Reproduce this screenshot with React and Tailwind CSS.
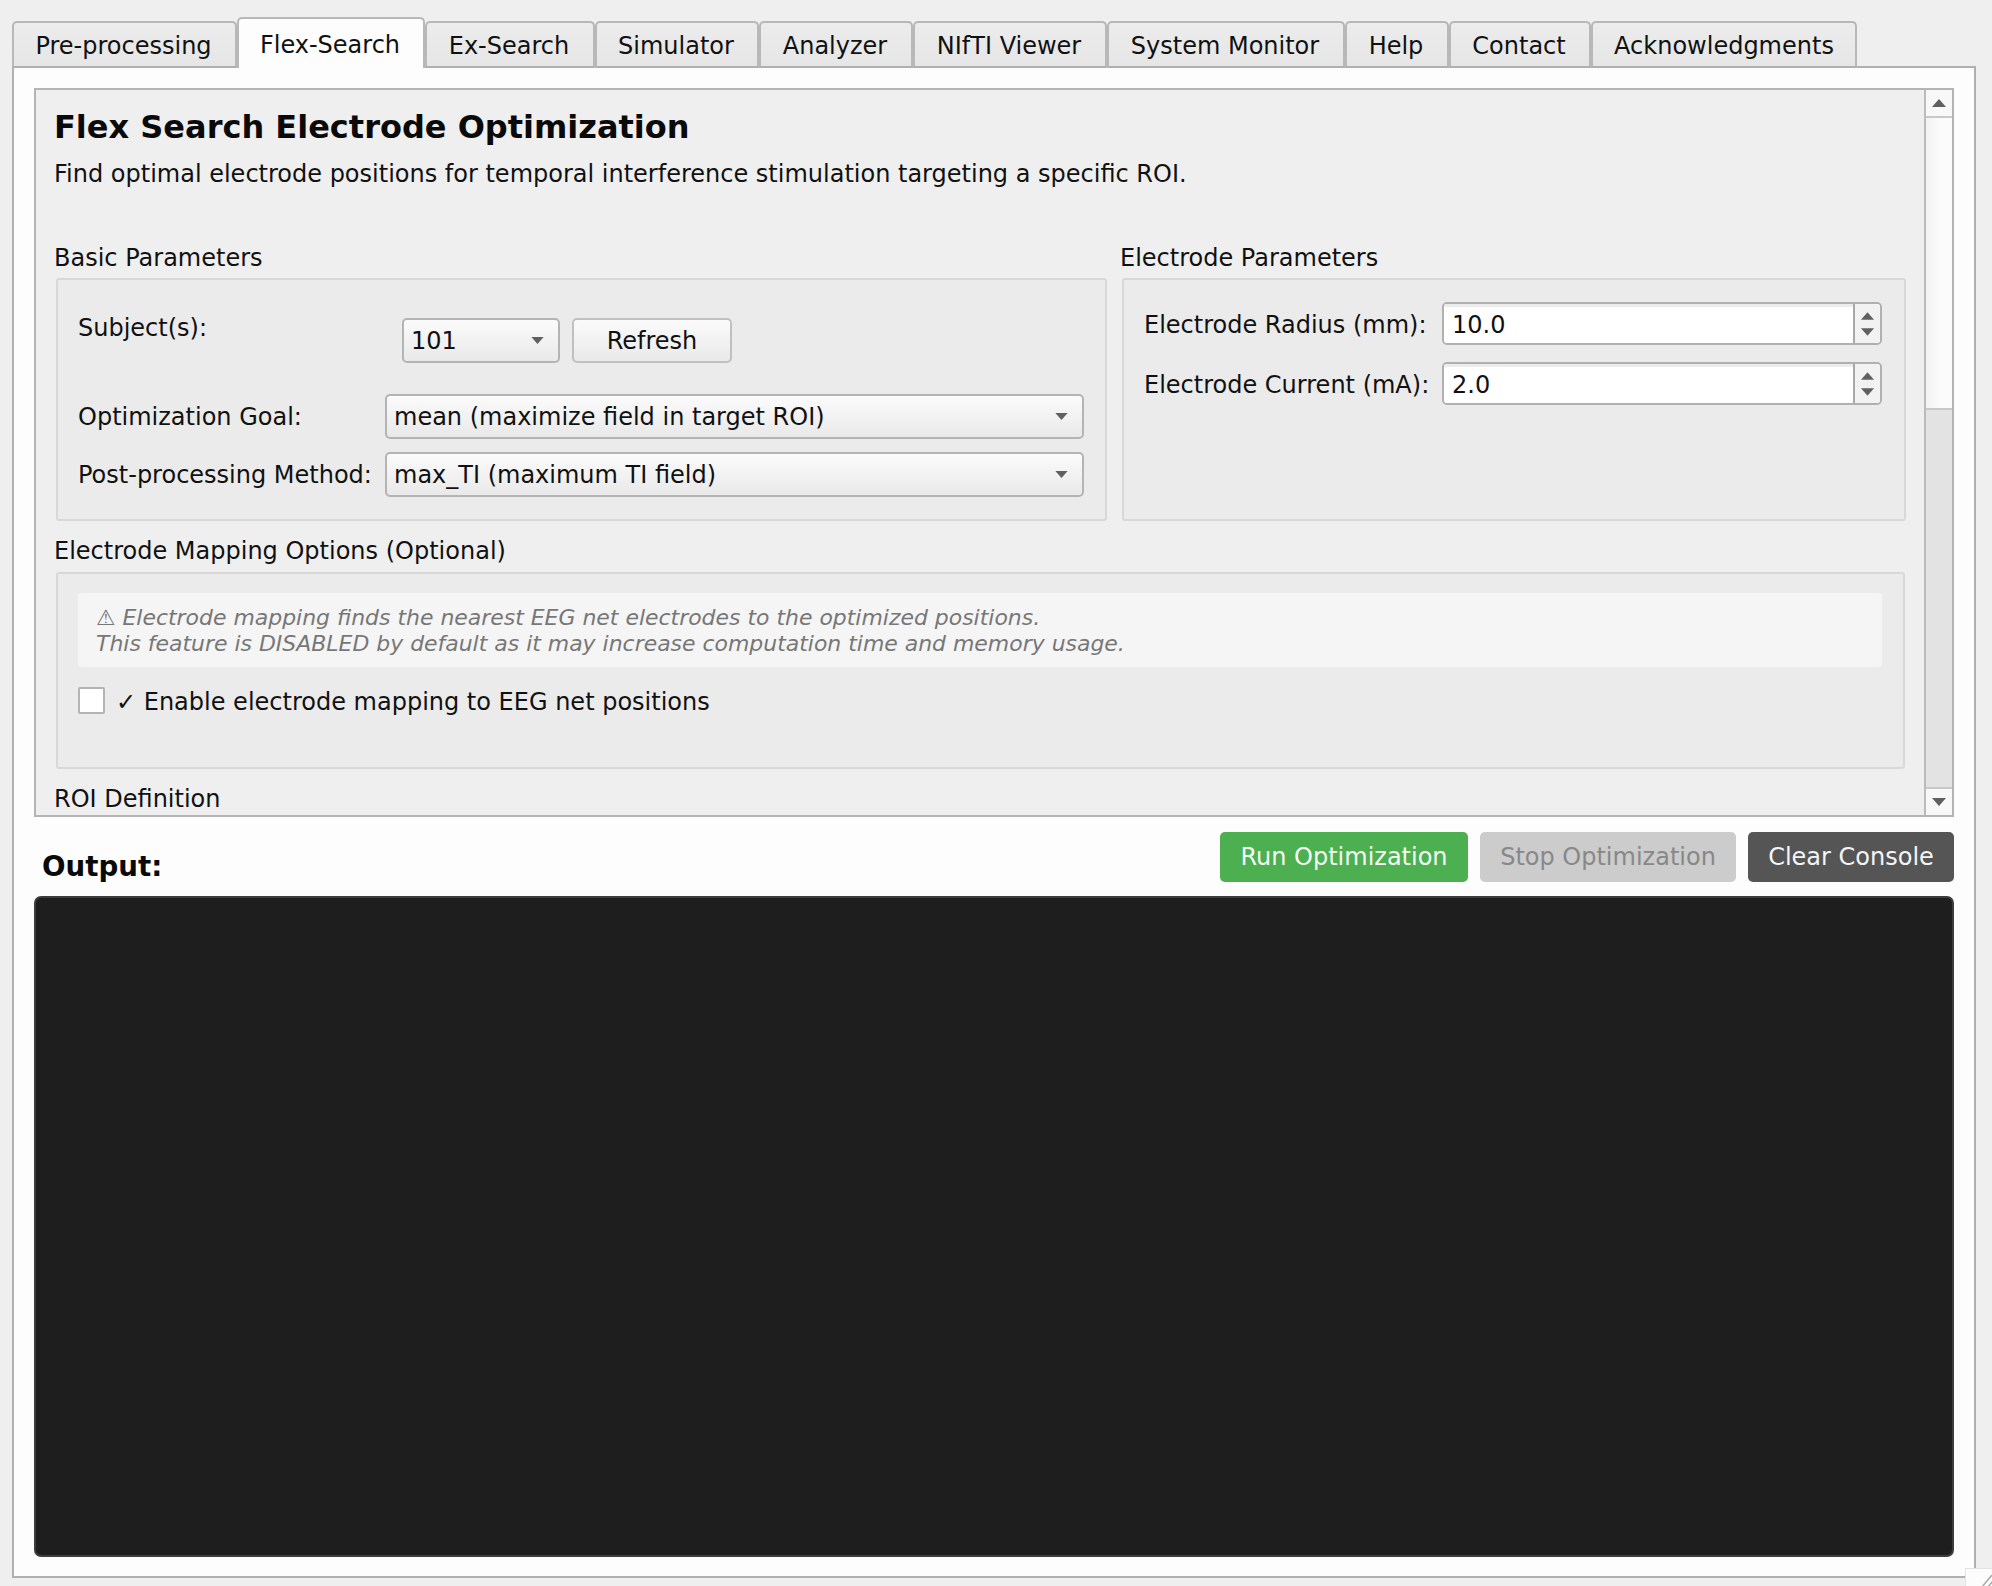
import React from "react";

const tabs = [
  ["Pre-processing", 225],
  ["Flex-Search", 188],
  ["Ex-Search", 170],
  ["Simulator", 164],
  ["Analyzer", 154],
  ["NIfTI Viewer", 194],
  ["System Monitor", 238],
  ["Help", 104],
  ["Contact", 142],
  ["Acknowledgments", 266],
];

function Tri({ dir = "down", cls = "" }) {
  return (
    <svg width="14" height="8" viewBox="0 0 14 8" className={cls}>
      <polygon points={dir === "down" ? "0,0 14,0 7,8" : "0,8 14,8 7,0"} fill="#606060" />
    </svg>
  );
}

function Combo({ text, width }) {
  return (
    <div
      className={`flex items-center justify-between h-[45px] rounded-[5px] border-2 border-[#b4b4b4] bg-gradient-to-b from-[#fbfbfb] to-[#e9e9e9] pl-[7px] pr-[14px] ${width}`}
    >
      <span className="pt-[1px]">{text}</span>
      <Tri cls="w-[13px] h-[7px]" />
    </div>
  );
}

function Spin({ value }) {
  return (
    <div className="flex h-[43px] w-[440px] rounded-[5px] border-2 border-[#b0b0b0] bg-white overflow-hidden">
      <div className="flex-1 flex items-center pl-[8px] bg-white border-t-[3px] border-[#ececec]">{value}</div>
      <div className="w-[27px] border-l-2 border-[#a8a8a8] bg-[#f2f2f2] flex flex-col items-center justify-center gap-[8px]">
        <Tri dir="up" cls="w-[13px] h-[8px]" />
        <Tri cls="w-[13px] h-[8px]" />
      </div>
    </div>
  );
}

function GroupLabel({ children, cls = "" }) {
  return <div className={`h-[24px] leading-[24px] ${cls}`}>{children}</div>;
}

export default function App() {
  return (
    <div
      className="w-[1992px] h-[1586px] bg-[#efefef] text-[#111111] text-[24px] overflow-hidden relative"
      style={{ fontFamily: '"DejaVu Sans", sans-serif' }}
    >
      {/* Tab bar */}
      <div className="flex items-end h-[68px] ml-[12px] -mb-[2px] relative z-10">
        {tabs.map(([t, w], i) => {
          const active = i === 1;
          const last = i === tabs.length - 1;
          return (
            <div
              key={t}
              style={{ width: w }}
              className={
                active
                  ? "h-[51px] shrink-0 flex justify-center items-start pt-[8px] pr-[2px] rounded-t-[5px] border-2 border-b-0 border-[#b8b8b8] bg-[#fdfdfd]"
                  : last
                  ? "h-[47px] shrink-0 flex justify-center items-start pt-[5px] rounded-t-[5px] border-2 border-[#b8b8b8] border-b-[#b0b0b0] bg-gradient-to-b from-[#ececec] to-[#e6e6e6]"
                  : "h-[47px] shrink-0 flex justify-center items-start pt-[5px] pr-[2px] rounded-t-[5px] border-2 border-[#b8b8b8] border-b-[#b0b0b0] bg-gradient-to-b from-[#ececec] to-[#e6e6e6]"
              }
            >
              {t}
            </div>
          );
        })}
      </div>

      {/* Pane */}
      <div className="ml-[12px] w-[1964px] h-[1512px] border-2 border-[#b0b0b0] bg-[#fdfdfd] flex flex-col pl-[20px] pr-[20px] pt-[20px]">
        {/* Scroll area */}
        <div className="h-[729px] shrink-0 border-2 border-[#b4b4b4] bg-[#efefef] flex">
          <div className="flex-1 min-w-0 overflow-hidden pl-[18px] pt-[21px]">
            <div className="h-[32px] leading-[32px] font-bold text-[32px] text-[#0a0a0a] whitespace-nowrap">Flex Search Electrode Optimization</div>
            <div className="h-[30px] leading-[30px] mt-[16px] whitespace-nowrap">
              Find optimal electrode positions for temporal interference stimulation targeting a specific ROI.
            </div>
            <div className="grid grid-cols-[1066px_786px] mt-[56px]">
              <div>
                <GroupLabel cls="pt-[1px]">Basic Parameters</GroupLabel>
                <div className="mt-[9px] ml-[2px] w-[1051px] h-[243px] rounded-[3px] border-2 border-[#d8d8d8] bg-[#ebebeb] pl-[20px] pt-[38px]">
                  <div className="flex h-[45px]">
                    <div className="w-[324px] leading-[24px] -mt-[2px]">Subject(s):</div>
                    <Combo text="101" width="w-[158px]" />
                    <div className="ml-[12px] w-[160px] h-[45px] pt-[1px] rounded-[5px] border-2 border-[#c0c0c0] bg-gradient-to-b from-[#fbfbfb] to-[#e9e9e9] flex items-center justify-center">
                      Refresh
                    </div>
                  </div>
                  <div className="flex items-center h-[45px] mt-[31px]">
                    <div className="w-[307px] pt-[1px] whitespace-nowrap">Optimization Goal:</div>
                    <Combo text="mean (maximize field in target ROI)" width="w-[699px]" />
                  </div>
                  <div className="flex items-center h-[45px] mt-[13px]">
                    <div className="w-[307px] pt-[1px] whitespace-nowrap">Post-processing Method:</div>
                    <Combo text="max_TI (maximum TI field)" width="w-[699px]" />
                  </div>
                </div>
              </div>
              <div>
                <GroupLabel cls="pt-[1px]">Electrode Parameters</GroupLabel>
                <div className="mt-[9px] ml-[2px] w-[784px] h-[243px] rounded-[3px] border-2 border-[#d8d8d8] bg-[#ebebeb] pl-[20px] pt-[22px]">
                  <div className="flex items-center">
                    <div className="w-[298px] pt-[2px] whitespace-nowrap">Electrode Radius (mm):</div>
                    <Spin value="10.0" />
                  </div>
                  <div className="flex items-center mt-[17px]">
                    <div className="w-[298px] pt-[2px] whitespace-nowrap">Electrode Current (mA):</div>
                    <Spin value="2.0" />
                  </div>
                </div>
              </div>
            </div>
            <GroupLabel cls="mt-[18px]">Electrode Mapping Options (Optional)</GroupLabel>
            <div className="mt-[9px] ml-[2px] w-[1849px] h-[197px] rounded-[3px] border-2 border-[#d8d8d8] bg-[#ebebeb] pl-[20px] pr-[21px] pt-[19px]">
              <div className="h-[74px] rounded-[3px] bg-[#f5f5f5] pl-[18px] pt-[12px] italic text-[#777777] text-[21.95px] leading-[26px]">
                <div className="whitespace-nowrap">⚠ Electrode mapping finds the nearest EEG net electrodes to the optimized positions.</div>
                <div className="whitespace-nowrap">This feature is DISABLED by default as it may increase computation time and memory usage.</div>
              </div>
              <div className="flex items-center mt-[20px] h-[27px]">
                <div className="w-[27px] h-[27px] rounded-[2px] border-2 border-[#b4b4b4] bg-white" />
                <div className="ml-[11px] pt-[2px] whitespace-nowrap">✓ Enable electrode mapping to EEG net positions</div>
              </div>
            </div>
            <GroupLabel cls="mt-[18px]">ROI Definition</GroupLabel>
          </div>
          {/* Scrollbar */}
          <div className="w-[28px] shrink-0 border-l-2 border-[#bbbbbb] flex flex-col">
            <div className="h-[28px] shrink-0 border-b-2 border-[#c8c8c8] bg-[#f8f8f8] flex items-center justify-center">
              <Tri dir="up" cls="w-[14px] h-[8px]" />
            </div>
            <div className="h-[292px] shrink-0 border-b-2 border-[#c8c8c8] bg-gradient-to-r from-[#f2f2f2] via-[#fbfbfb] to-[#fbfbfb]" />
            <div className="flex-1 bg-[#e3e3e3]" />
            <div className="h-[28px] shrink-0 border-t-2 border-[#c8c8c8] bg-[#f8f8f8] flex items-center justify-center">
              <Tri cls="w-[14px] h-[8px]" />
            </div>
          </div>
        </div>

        {/* Output header */}
        <div className="flex items-center justify-between h-[50px] mt-[15px] shrink-0">
          <div className="font-bold text-[#0a0a0a] text-[27.7px] pl-[8px] pt-[19px]">Output:</div>
          <div className="flex gap-[12px]">
            <div className="w-[248px] h-[50px] rounded-[5px] bg-[#4caf50] text-[#f4fbf4] flex items-center justify-center">Run Optimization</div>
            <div className="w-[256px] h-[50px] rounded-[5px] bg-[#cccccc] text-[#888888] flex items-center justify-center">Stop Optimization</div>
            <div className="w-[206px] h-[50px] rounded-[5px] bg-[#555555] text-[#f4f4f4] flex items-center justify-center">Clear Console</div>
          </div>
        </div>

        {/* Console */}
        <div className="mt-[14px] h-[661px] shrink-0 rounded-[7px] border-2 border-[#3d3d3d] bg-[#1e1e1e]" />
      </div>

      {/* Resize grip */}
      <div className="absolute right-0 bottom-0 w-[27px] h-[18px] bg-[#fcfcfc] border-l border-t border-[#e2e2e2]">
        <svg width="27" height="18" viewBox="0 0 27 18">
          <path d="M16 18 L26 6 M22 18 L27 12" stroke="#a8a8a8" strokeWidth="1.5" fill="none" />
        </svg>
      </div>
    </div>
  );
}
